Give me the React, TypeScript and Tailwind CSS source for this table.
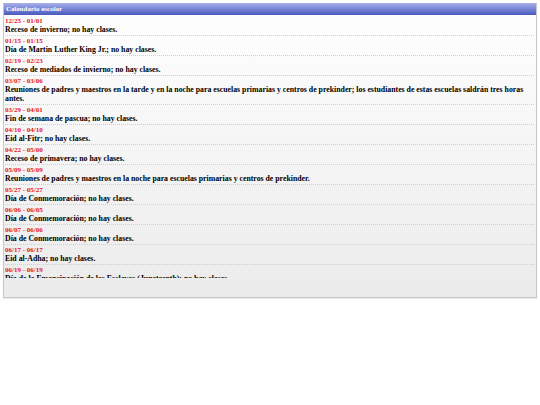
const events = [
  { range: "12/25 - 01/01", text: "Receso de invierno; no hay clases." },
  { range: "01/15 - 01/15", text: "Día de Martin Luther King Jr.; no hay clases." },
  { range: "02/19 - 02/23", text: "Receso de mediados de invierno; no hay clases." },
  {
    range: "03/07 - 03/06",
    text: "Reuniones de padres y maestros en la tarde y en la noche para escuelas primarias y centros de prekinder; los estudiantes de estas escuelas saldrán tres horas antes.",
  },
  { range: "03/29 - 04/01", text: "Fin de semana de pascua; no hay clases." },
  { range: "04/10 - 04/10", text: "Eid al-Fitr; no hay clases." },
  { range: "04/22 - 05/00", text: "Receso de primavera; no hay clases." },
  {
    range: "05/09 - 05/09",
    text: "Reuniones de padres y maestros en la noche para escuelas primarias y centros de prekinder.",
  },
  { range: "05/27 - 05/27", text: "Día de Conmemoración; no hay clases." },
  { range: "06/06 - 06/05", text: "Día de Conmemoración; no hay clases." },
  { range: "06/07 - 06/06", text: "Día de Conmemoración; no hay clases." },
  { range: "06/17 - 06/17", text: "Eid al-Adha; no hay clases." },
  { range: "06/19 - 06/19", text: "Día de la Emancipación de los Esclavos (Juneteenth); no hay clases." },
];

export default function App() {
  return (
    <div className="w-[540px] h-[405px] bg-white p-[3px] font-['Liberation_Serif',serif]">
      <div className="w-[534px] border-r border-b border-l border-[#c8c8c8] bg-gradient-to-b from-white to-[#ebebeb] shadow-[0_1px_1px_rgba(0,0,0,0.08)]">
        {/* header */}
        <div className="h-[12px] px-[2px] flex items-center bg-gradient-to-b from-[#a9b1ea] to-[#4a58bd] text-white text-[7px] font-bold leading-none">
          Calendario escolar
        </div>

        {/* scrolling list */}
        <div className="h-[263px] overflow-hidden pl-[1px] pr-[2px] pt-[1px]">
          {events.map((e, i) => (
            <div
              key={i}
              className="pt-[1px] pb-[1px] border-b border-dotted border-[#cfcfcf] font-bold"
            >
              <div className="text-[7px] leading-[8px] text-[#e8141b]">{e.range}</div>
              <div className="text-[7.8px] leading-[9px] text-black">{e.text}</div>
            </div>
          ))}
        </div>

        <div className="h-[19px]" />
      </div>
    </div>
  );
}
